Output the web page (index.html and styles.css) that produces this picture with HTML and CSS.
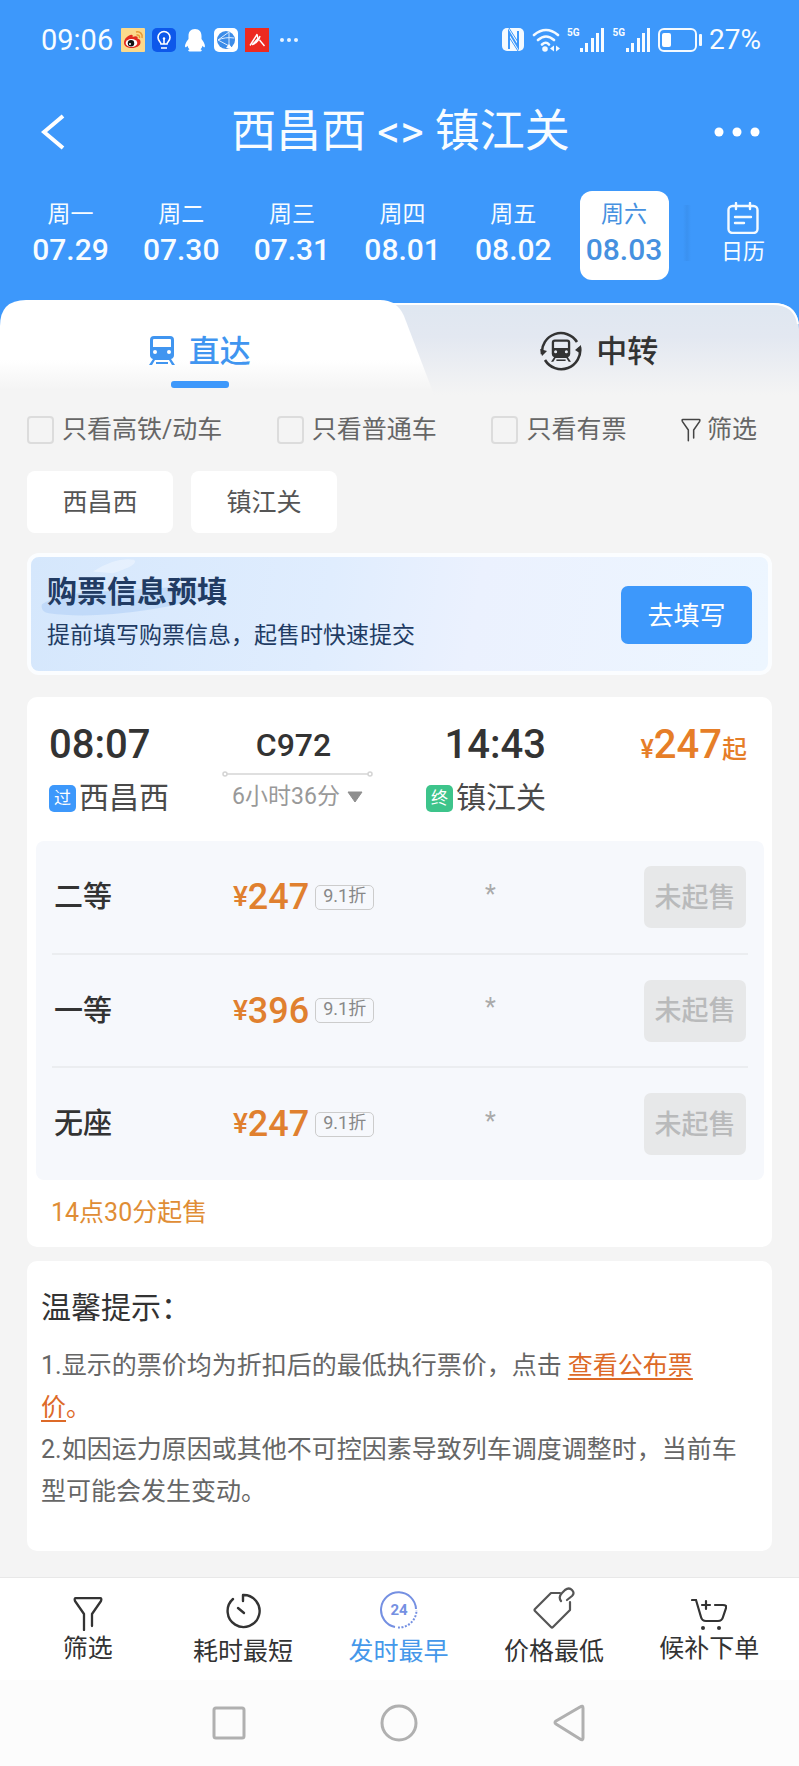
FILE: index.html
```html
<!DOCTYPE html>
<html lang="zh-CN">
<head>
<meta charset="utf-8">
<meta name="viewport" content="width=device-width, initial-scale=1">
<title>西昌西 - 镇江关</title>
<link rel="stylesheet" href="styles.css">
</head>
<body>
<svg class="defs" aria-hidden="true">
  <symbol id="train" viewBox="0 0 26 30">
    <path fill="currentColor" fill-rule="evenodd" d="M5 0h16q4 0 4 4v15q0 3-3 4l4 6h-3l-3-5H6l-3 5H0l4-6q-3-1-3-4V4q0-4 4-4zM5 3q-1 0-1 1v7h18V4q0-1-1-1zM6 14a2 2 0 1 0 0 4a2 2 0 0 0 0-4zM20 14a2 2 0 1 0 0 4a2 2 0 0 0 0-4z"/>
    <path stroke="currentColor" stroke-width="2" d="M7 27h12"/>
  </symbol>
  <symbol id="funnel" viewBox="0 0 30 34">
    <path fill="none" stroke="currentColor" stroke-width="2.300" stroke-linecap="round" stroke-linejoin="round" d="M11 33V17L2 4Q1 1 3 1.200H27Q29 1 28 4L19 17V29"/>
  </symbol>
  <symbol id="bars" viewBox="0 0 26 24">
    <path fill="currentColor" d="M1 20h3v4H1zM6 15h3v9H6zM12 10h3v14h-3zM17 5h3v19h-3zM22 0h3v24h-3z"/>
  </symbol>
</svg>

<header class="top">
  <div class="status">
    <span class="clock">09:06</span>
    <svg class="app" viewBox="0 0 24 24"><rect width="24" height="24" rx="1" fill="#fbd98b"/><path d="M3 15c0-5 6-9 8-8 1 0 1 1 .5 2 3-1.500 6-1 5 1.500 3 1 3 2 3 4 0 3-4 5.500-8.500 5.500S3 18 3 15z" fill="#e02a1f"/><ellipse cx="10.500" cy="15" rx="5.800" ry="4" fill="#fff"/><circle cx="10" cy="15.200" r="3.200" fill="#111"/><circle cx="9" cy="16" r="1" fill="#fff"/><path d="M15 4c4-1 7 2 6 6M15.500 7c2-.5 3.500 1 3 3" fill="none" stroke="#e89a35" stroke-width="1.500"/></svg>
    <svg class="app" viewBox="0 0 24 24"><rect width="24" height="24" rx="5" fill="#0d58ea"/><path d="M9 16c0-2-3-3-3-6.500a6 6 0 0 1 12 0c0 3.500-3 4.500-3 6.500zM12 11v5M9 20h6" fill="none" stroke="#fff" stroke-width="1.600"/><circle cx="12" cy="10.500" r="1.200" fill="#fff"/></svg>
    <svg class="app" viewBox="0 0 24 24"><path d="M12 1c4.500 0 6.500 3 6.500 7v3c2 2.500 4 6 3.300 8-.5 1-1.600-.4-2.300-1.300-.3 1.500-1 2.600-2 3.500 1.500.5 2 1.800 0 2.300h-11c-2-.5-1.500-1.800 0-2.300-1-.9-1.700-2-2-3.500-.7.900-1.800 2.300-2.300 1.300-.7-2 1.300-5.500 3.300-8V8c0-4 2-7 6.500-7z" fill="#fff"/></svg>
    <svg class="app" viewBox="0 0 24 24"><rect width="24" height="24" rx="5" fill="#fff"/><circle cx="12" cy="12" r="9" fill="#3d8ce8"/><path d="M4 12L15 4M4 12l13 7M15 4v17M4 12c4-2 11-3 16-2" stroke="#dcecff" fill="none" stroke-width="1"/><path d="M12 20l3-4 3 4z" fill="#fff"/></svg>
    <svg class="app" viewBox="0 0 24 24"><rect width="24" height="24" fill="#ed2a20"/><path d="M5 17.500L12 6.500l1 4-5.500 6c4-1.500 6.500-4.500 7.500-8.500M14.500 12l5 6" fill="none" stroke="#fff" stroke-width="1.400" stroke-linejoin="round"/></svg>
    <svg class="more-small" viewBox="0 0 20 6" fill="#e8f4ff"><circle cx="3" cy="3" r="2"/><circle cx="10" cy="3" r="2"/><circle cx="17" cy="3" r="2"/></svg>
    <span class="signals">
      <svg class="nfc" viewBox="0 0 23 24"><rect width="22" height="23" rx="5" fill="#f4faff"/><path d="M7 21V4l9 15V3" fill="none" stroke="#3d98fb" stroke-width="2"/><path d="M7 9l9 14M7 0l9 14" stroke="#3d98fb" stroke-width="1"/></svg>
      <svg class="wifi" viewBox="0 0 28 24" fill="none" stroke="#f4faff" stroke-width="2.600" stroke-linecap="round"><path d="M2 7q12-10 24 0M6 12q8-7 16 0M10 16.500q4-3.500 7 0"/><circle cx="13" cy="21" r="1.500" fill="#f4faff"/><path d="M22 17.500l-4 3 4 3zM24 17.500l4 3-4 3z" fill="#f4faff" stroke="none"/></svg>
      <span class="cell"><span class="gen">5G</span><svg class="bars"><use href="#bars"/></svg></span>
      <span class="cell"><span class="gen">5G</span><svg class="bars"><use href="#bars"/></svg></span>
      <svg class="battery" viewBox="0 0 44 24"><rect x="1" y="1" width="37" height="22" rx="5" fill="none" stroke="#f4faff" stroke-width="2"/><rect x="4" y="5" width="9" height="14" rx="2" fill="#fff"/><rect x="41" y="6" width="3" height="12" rx="1" fill="#f4faff"/></svg>
      <span class="percent">27%</span>
    </span>
  </div>

  <div class="titlebar">
    <button class="icon-btn" aria-label="返回"><svg width="24" height="36" viewBox="0 0 24 36"><path d="M22 2L3 18l19 16" fill="none" stroke="#fff" stroke-width="4"/></svg></button>
    <h1>西昌西 &lt;&gt; 镇江关</h1>
    <button class="icon-btn" aria-label="更多"><svg width="46" height="12" viewBox="0 0 46 12" fill="#fff"><circle cx="5" cy="6" r="4.500"/><circle cx="23" cy="6" r="4.500"/><circle cx="41" cy="6" r="4.500"/></svg></button>
  </div>

  <nav class="dates">
    <button class="date"><span>周一</span><b>07.29</b></button>
    <button class="date"><span>周二</span><b>07.30</b></button>
    <button class="date"><span>周三</span><b>07.31</b></button>
    <button class="date"><span>周四</span><b>08.01</b></button>
    <button class="date"><span>周五</span><b>08.02</b></button>
    <button class="date current"><span>周六</span><b>08.03</b></button>
    <i class="edge"></i>
    <button class="calendar">
      <svg width="32" height="32" viewBox="0 0 32 32" fill="none" stroke="#f4faff" stroke-width="2.400" stroke-linecap="round"><rect x="1.500" y="4" width="29" height="27" rx="4"/><path d="M9 1v6M23 1v6M8 15h16M8 21h9" /></svg>
      <span>日历</span>
    </button>
  </nav>
</header>

<main>
  <div class="tabs">
    <svg class="tabs-shape" viewBox="0 0 799 100" preserveAspectRatio="none" aria-hidden="true">
      <defs>
        <linearGradient id="fadeWhite" x1="0" y1="0" x2="0" y2="1"><stop offset=".6" stop-color="#fff"/><stop offset=".9" stop-color="#f4f4f4"/></linearGradient>
        <linearGradient id="fadeBlue" x1="0" y1="0" x2="0" y2="1"><stop offset="0" stop-color="#dfe7f1"/><stop offset=".35" stop-color="#e3e8f1"/><stop offset=".95" stop-color="#f4f4f4"/></linearGradient>
      </defs>
      <rect width="799" height="30" fill="#3d98fb"/>
      <path d="M0 100V27H380V3H773Q799 3 799 29V100z" fill="url(#fadeBlue)"/>
      <path d="M380 4H773Q795 4 798 24" fill="none" stroke="#fff" stroke-width="2"/>
      <path d="M0 100V26Q0 0 26 0H380Q397 0 404 16L436 100z" fill="url(#fadeWhite)"/>
    </svg>
    <button class="tab active"><svg width="26" height="30"><use href="#train"/></svg><span>直达</span></button>
    <button class="tab">
      <svg width="42" height="42" viewBox="0 0 42 42"><g fill="none" stroke="currentColor" stroke-width="2.600"><path d="M2 24A19 19 0 0 1 37 12"/><path d="M40 17A19 19 0 0 1 5 30"/></g><path fill="currentColor" d="M0 19l2 7 5-5zM35 20l6-5v9z"/><use href="#train" x="11" y="9" width="20" height="24"/></svg>
      <span>中转</span>
    </button>
  </div>

  <div class="filters">
    <label><input type="checkbox">只看高铁/动车</label>
    <label><input type="checkbox">只看普通车</label>
    <label><input type="checkbox">只看有票</label>
    <button class="filter-btn"><svg width="20" height="24"><use href="#funnel"/></svg>筛选</button>
  </div>

  <div class="chips"><button>西昌西</button><button>镇江关</button></div>

  <section class="banner">
    <svg class="cloud" viewBox="0 0 260 66" preserveAspectRatio="none" aria-hidden="true"><path d="M3 52Q20 40 60 38T180 30Q170 48 110 58T10 62Q1 60 3 52z" fill="#b3d1f7" opacity=".6"/><path d="M54 16Q76 0 95 3Q101 8 74 18z" fill="#fff" opacity=".35"/></svg>
    <div class="banner-text">
      <h2>购票信息预填</h2>
      <p>提前填写购票信息，起售时快速提交</p>
    </div>
    <button>去填写</button>
  </section>

  <article class="card train">
    <div class="trip">
      <div class="stop">
        <time>08:07</time>
        <div class="station"><span class="badge pass">过</span>西昌西</div>
      </div>
      <div class="run">
        <div class="number">C972</div>
        <svg class="line" viewBox="0 0 151 6" fill="#fff" stroke="#d4d4d4" stroke-width="1.500"><path d="M4 3h143"/><circle cx="3" cy="3" r="2"/><circle cx="148" cy="3" r="2"/></svg>
        <button class="duration">6小时36分<svg width="16" height="12" viewBox="0 0 16 12"><path d="M1 1h14L8 11z" fill="#8e8e8e" stroke="#8e8e8e" stroke-linejoin="round"/></svg></button>
      </div>
      <div class="stop">
        <time>14:43</time>
        <div class="station"><span class="badge last">终</span>镇江关</div>
      </div>
      <div class="from"><small>¥</small><b>247</b><small>起</small></div>
    </div>
    <div class="seats">
      <table>
        <tr><th scope="row">二等</th><td class="fare"><div><small>¥</small><b>247</b><span class="off">9.1折</span></div></td><td class="left">*</td><td class="act"><button disabled>未起售</button></td></tr>
        <tr><th scope="row">一等</th><td class="fare"><div><small>¥</small><b>396</b><span class="off">9.1折</span></div></td><td class="left">*</td><td class="act"><button disabled>未起售</button></td></tr>
        <tr><th scope="row">无座</th><td class="fare"><div><small>¥</small><b>247</b><span class="off">9.1折</span></div></td><td class="left">*</td><td class="act"><button disabled>未起售</button></td></tr>
      </table>
    </div>
    <p class="onsale">14点30分起售</p>
  </article>

  <section class="card tips">
    <h3>温馨提示：</h3>
    <p>1.显示的票价均为折扣后的最低执行票价，点击 <span class="accent"><a href="#">查看公布票价</a>。</span></p>
    <p>2.如因运力原因或其他不可控因素导致列车调度调整时，当前车型可能会发生变动。</p>
  </section>
</main>

<footer>
  <nav class="sorts">
    <button><svg width="30" height="34"><use href="#funnel"/></svg><span>筛选</span></button>
    <button class="low"><svg width="36" height="36" viewBox="0 0 36 36" fill="none" stroke="currentColor" stroke-width="2.400" stroke-linecap="round" stroke-linejoin="round"><path d="M18 8V2A16 16 0 1 1 8 6"/><path d="M13 15l6 5"/></svg><span>耗时最短</span></button>
    <button class="low chosen"><svg width="38" height="38" viewBox="0 0 38 38" fill="none" stroke="#7590e2" stroke-width="2"><path d="M36 18A17.500 17.500 0 1 0 15 36"/><path d="M18 36.500A17.500 17.500 0 0 0 36.500 19" stroke-dasharray="2 1.500"/><text x="19" y="24" text-anchor="middle" class="t24">24</text></svg><span>发时最早</span></button>
    <button class="low"><svg width="42" height="42" viewBox="0 0 42 42" fill="none" stroke="#555" stroke-width="2.200" stroke-linecap="round" stroke-linejoin="round"><path d="M27 6H18L2 22q-1 1 0 2L18 40q1 1 2 0L37 23V15"/><path d="M28 14q-3-4 1-8l3-3q4-3 7 0t0 6l-5 4"/></svg><span>价格最低</span></button>
    <button><svg width="36" height="34" viewBox="0 0 36 34" fill="none" stroke="currentColor" stroke-width="2.200" stroke-linecap="round"><path d="M1 3H5L10 20q1 4 5 4H27q4 0 5-4l3-9q1-3-3-3H24M11 8h8M15 4v8"/><circle cx="12" cy="31" r="2" fill="currentColor" stroke="none"/><circle cx="28" cy="31" r="2" fill="currentColor" stroke="none"/></svg><span>候补下单</span></button>
  </nav>
  <nav class="system">
    <button aria-label="最近任务"><svg width="34" height="34"><rect x="2" y="2" width="30" height="30" rx="2"/></svg></button>
    <button aria-label="主页"><svg width="38" height="38"><circle cx="19" cy="19" r="17"/></svg></button>
    <button aria-label="返回"><svg width="34" height="38"><path d="M31 4Q31 1 28 3L4 17q-2 1.500 0 3L28 35q3 2 3-1z"/></svg></button>
  </nav>
</footer>
</body>
</html>
```

FILE: styles.css
```css
* { box-sizing: border-box; }

body {
  margin: 0;
  min-height: 100vh;
  display: flex;
  flex-direction: column;
  background: #f4f4f4;
  color: #333;
  font-family: Roboto, "Noto Sans CJK SC", sans-serif;
  font-size: 25px;
}

h1, h2, h3, p { margin: 0; }

button {
  border: 0;
  padding: 0;
  background: none;
  color: inherit;
  font: inherit;
}

svg { display: block; flex: none; }
.defs { position: absolute; width: 0; height: 0; }

/* Header */
.top { background: #3d98fb; color: #f8fcff; }

.status {
  display: flex;
  align-items: center;
  gap: 7px;
  height: 79px;
  padding: 0 38px 0 41px;
  font-size: 28px;
}
.clock { margin-right: 1px; font-size: 29px; }
.app { width: 24px; height: 24px; }
.more-small { width: 20px; height: 6px; margin-left: 3px; }
.signals { display: flex; align-items: center; gap: 7px; margin-left: auto; }
.nfc { width: 23px; height: 24px; }
.wifi { width: 28px; height: 24px; }
.cell { display: flex; align-items: flex-start; }
.gen { font-size: 10px; font-weight: 700; line-height: 10px; }
.bars { width: 26px; height: 24px; }
.battery { width: 44px; height: 24px; }

.titlebar {
  display: flex;
  align-items: center;
  justify-content: space-between;
  height: 106px;
  padding: 0 39px 0 41px;
}
.titlebar h1 { font-size: 45px; font-weight: 400; line-height: 60px; }
.icon-btn { display: flex; width: 46px; }

.dates {
  display: flex;
  justify-content: space-between;
  align-items: flex-start;
  padding: 6px 26px 20px;
}
.date {
  display: flex;
  flex-direction: column;
  align-items: center;
  width: 89px;
  height: 89px;
  padding-top: 7px;
  border-radius: 12px;
  font-size: 23px;
  line-height: 34px;
}
.date b { font-size: 30px; font-weight: 500; line-height: 36px; }
.date.current { background: #fff; color: #4691e0; }
.edge {
  width: 8px;
  height: 56px;
  margin: 14px 0 0 -7px;
  background: linear-gradient(90deg, transparent, #3a91f0, transparent);
}
.calendar {
  display: flex;
  flex-direction: column;
  align-items: center;
  width: 60px;
  padding-top: 11px;
  font-size: 22px;
  line-height: 36px;
}

/* Direct and transfer tabs */
.tabs { position: relative; display: flex; height: 100px; }
.tabs-shape { position: absolute; inset: 0; width: 100%; height: 100%; }
.tab {
  position: relative;
  flex: 1;
  display: flex;
  align-items: center;
  justify-content: center;
  gap: 14px;
  height: 102px;
  font-size: 31px;
  font-weight: 500;
}
.tab span { padding-bottom: 5px; }
.tab.active { color: #4095f0; }
.tab.active::after {
  content: "";
  position: absolute;
  bottom: 14px;
  width: 58px;
  height: 7px;
  border-radius: 3px;
  background: #3d98fb;
}

/* Filters */
.filters {
  display: flex;
  align-items: center;
  justify-content: space-between;
  padding: 10px 42px 0 27px;
  color: #666;
  line-height: 40px;
}
.filters label, .filter-btn { display: flex; align-items: center; }
.filters label { gap: 8px; }
.filter-btn { gap: 6px; }
.filter-btn svg { color: #444; }
.filters input {
  appearance: none;
  width: 27px;
  height: 28px;
  margin: 0;
  border: 2px solid #dcdcdc;
  border-radius: 4px;
}

.chips { display: flex; gap: 18px; padding: 21px 27px 0; }
.chips button {
  width: 146px;
  height: 62px;
  padding-bottom: 4px;
  border-radius: 8px;
  background: #fff;
  color: #555;
}

/* Prefill banner */
.banner {
  position: relative;
  display: flex;
  align-items: center;
  justify-content: space-between;
  height: 122px;
  margin: 20px 27px 0;
  padding: 0 16px;
  border: 4px solid #fbfdff;
  border-radius: 12px;
  background: linear-gradient(100deg, #d5e7fc 0%, #e0edfe 40%, #ebf1fe 60%, #edf6ff 100%);
  color: #213b63;
}
.cloud { position: absolute; left: 8px; top: 0; width: 260px; height: 60px; }
.banner-text { position: relative; }
.banner h2 { font-size: 30px; font-weight: 700; line-height: 44px; }
.banner p { font-size: 23px; line-height: 44px; }
.banner button {
  width: 131px;
  height: 58px;
  padding-bottom: 3px;
  margin-top: 2px;
  border-radius: 7px;
  background: #3d98fb;
  color: #fff;
  font-size: 26px;
}

/* Cards */
.card { margin: 0 27px; border-radius: 10px; background: #fff; }
.train { margin-top: 22px; padding: 22px 8px 16px 9px; }

.trip { display: flex; gap: 53px; padding: 0 17px 0 13px; }
.stop time {
  display: block;
  font-size: 40px;
  font-weight: 500;
  line-height: 52px;
}
.stop:nth-child(3) time { text-align: right; }
.station {
  display: flex;
  align-items: center;
  gap: 3px;
  font-size: 30px;
  line-height: 54px;
  color: #4a4a4a;
}
.badge {
  width: 27px;
  height: 27px;
  border-radius: 5px;
  color: #fff;
  font-size: 17px;
  line-height: 27px;
  text-align: center;
}
.pass { background: #3d98fb; }
.last { background: #3dc48b; }
.run { display: flex; flex-direction: column; align-items: center; }
.number { padding-right: 8px; font-size: 32px; font-weight: 500; line-height: 52px; }
.line { width: 151px; height: 6px; }
.duration {
  display: flex;
  align-items: center;
  gap: 7px;
  color: #999;
  font-size: 23px;
  line-height: 40px;
}
.from { margin-left: auto; color: #e67e28; line-height: 52px; white-space: nowrap; }
.from b { font-size: 40px; font-weight: 500; }
.from small { font-size: 25px; font-weight: 500; }

.seats {
  margin-top: 16px;
  padding: 0 16px;
  border-radius: 8px;
  background: #f6f8fc;
}
.seats table { width: 100%; table-layout: fixed; border-collapse: collapse; }
.seats tr + tr { border-top: 2px solid #ebedf0; }
.seats th, .seats td { height: 113px; padding: 0; }
.seats th {
  width: 26%;
  padding: 0 0 6px 2px;
  text-align: left;
  font-size: 29px;
  font-weight: 500;
}
.fare { width: 29%; color: #e0802f; }
.fare div { display: flex; align-items: center; line-height: 40px; }
.fare small { font-size: 28px; font-weight: 500; line-height: 36px; }
.fare b { font-size: 36px; font-weight: 500; }
.off {
  height: 25px;
  margin-left: 6px;
  padding: 0 7px;
  border: 1px solid #ccc;
  border-radius: 5px;
  color: #888;
  font-size: 18px;
  line-height: 19px;
}
.seats .left { width: 16%; padding-bottom: 6px; text-align: center; color: #aaa; }
.act button {
  display: block;
  width: 102px;
  height: 62px;
  margin: 0 2px 0 auto;
  padding-bottom: 4px;
  border-radius: 7px;
  background: #e7e8e9;
  color: #b9babb;
  font-size: 27px;
  font-weight: 500;
}
.onsale { padding: 13px 15px 0; margin-bottom: -2px; color: #e08d35; line-height: 40px; }

.tips { margin-top: 14px; padding: 22px 31px 38px 14px; }
.tips h3 { font-size: 30px; font-weight: 400; line-height: 50px; margin-bottom: 12px; }
.tips p { color: #666; line-height: 42px; }
.accent, .accent a { color: #dd6a28; }
.accent a { text-underline-offset: 4px; text-decoration-thickness: 2px; }

/* Bottom bars */
footer { margin-top: auto; background: #fff; }
.sorts {
  display: flex;
  height: 103px;
  padding: 0 12px 0 10px;
  border-top: 1px solid #e8e8e8;
}
.sorts button {
  flex: 1;
  display: flex;
  flex-direction: column;
  align-items: center;
  justify-content: flex-end;
  padding-bottom: 13px;
  line-height: 36px;
}
.sorts .low { padding-bottom: 10px; }
.sorts .low svg { margin-bottom: 5px; }
.sorts .chosen { color: #4598ea; }
.t24 { fill: #7590e2; stroke: none; font-size: 15px; font-weight: 700; }

.system {
  display: flex;
  align-items: center;
  justify-content: center;
  gap: 134px;
  height: 86px;
  padding-right: 2px;
  background: #fcfcfc;
}
.system svg { fill: none; stroke: #b0b0b0; stroke-width: 3; }
```
